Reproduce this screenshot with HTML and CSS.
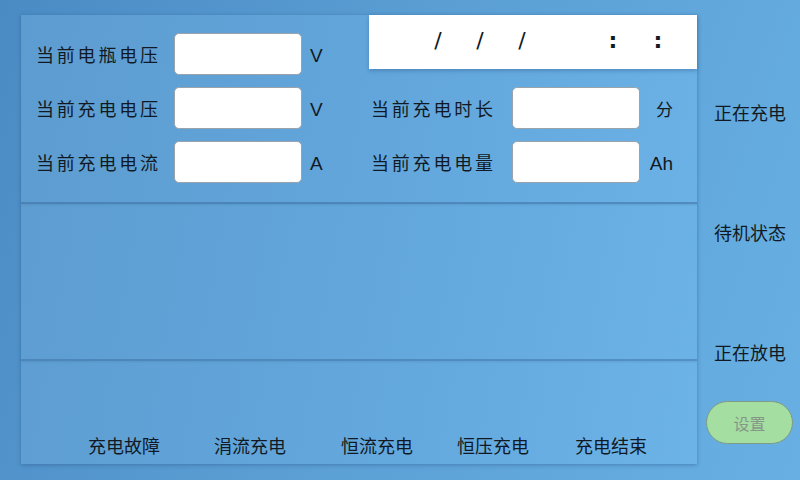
FILE: index.html
```html
<!DOCTYPE html>
<html lang="zh">
<head>
<meta charset="utf-8">
<link rel="stylesheet" href="styles.css">
</head>
<body>
<div class="screen">
  <div class="panel">
    <div class="section top">
      <div class="col left">
        <div class="row"><span class="label">当前电瓶电压</span><span class="field"></span><span class="unit">V</span></div>
        <div class="row"><span class="label">当前充电电压</span><span class="field"></span><span class="unit">V</span></div>
        <div class="row"><span class="label">当前充电电流</span><span class="field"></span><span class="unit">A</span></div>
      </div>
      <div class="col right">
        <div class="datebox">
          <span class="sep s1">/</span><span class="sep s2">/</span><span class="sep s3">/</span><span class="sep s4">:</span><span class="sep s5">:</span>
        </div>
        <div class="row r2"><span class="label">当前充电时长</span><span class="field"></span><span class="unit cn">分</span></div>
        <div class="row r3"><span class="label">当前充电电量</span><span class="field"></span><span class="unit">Ah</span></div>
      </div>
    </div>
    <div class="section middle"></div>
    <div class="section bottom">
      <span class="state">充电故障</span>
      <span class="state">涓流充电</span>
      <span class="state">恒流充电</span>
      <span class="state">恒压充电</span>
      <span class="state">充电结束</span>
    </div>
  </div>
  <div class="sidebar">
    <span class="mode">正在充电</span>
    <span class="mode">待机状态</span>
    <span class="mode">正在放电</span>
    <button class="setbtn">设置</button>
  </div>
</div>
</body>
</html>
```
FILE: styles.css
```css
html, body {
  margin: 0;
  padding: 0;
  width: 800px;
  height: 480px;
  overflow: hidden;
}
body {
  background: linear-gradient(110deg, #4a8bc3 0%, #5a9ed4 45%, #68b0e3 100%);
  font-family: "Noto Sans CJK SC", "Noto Sans", sans-serif;
  color: #111a24;
}
.screen {
  display: flex;
  padding: 15px 0 0 21px;
  height: 480px;
  box-sizing: border-box;
}
.panel {
  width: 676px;
  height: 449px;
  display: flex;
  flex-direction: column;
  background: linear-gradient(100deg, #5d9cd0 0%, #62a6db 50%, #6cb3e7 100%);
  box-shadow: 0 1px 4px rgba(40, 80, 130, 0.45);
}
.section.top {
  height: 187px;
  display: flex;
  border-bottom: 2px solid rgba(60, 110, 160, 0.55);
  box-shadow: 0 1px 2px rgba(60, 110, 160, 0.25);
}
.col.left {
  width: 348px;
  padding: 18px 0 0 15px;
  box-sizing: border-box;
  display: flex;
  flex-direction: column;
  gap: 12px;
}
.col.right {
  flex: 1;
  display: flex;
  flex-direction: column;
}
.row {
  display: flex;
  align-items: center;
  height: 42px;
}
.label {
  font-size: 18px;
  letter-spacing: 2.8px;
  width: 138px;
  white-space: nowrap;
}
.field {
  width: 126px;
  height: 40px;
  background: #ffffff;
  border: 1px solid #9aa3ab;
  border-radius: 5px;
}
.unit {
  font-family: "Liberation Sans", "Noto Sans CJK SC", sans-serif;
  font-size: 19px;
  margin-left: 8px;
  padding-top: 4px;
}
.col.right .row {
  padding-left: 2px;
}
.col.right .label {
  width: 141px;
}
.col.right .unit {
  margin-left: 0;
  width: 33px;
  text-align: right;
}
.col.right .unit.cn {
  font-family: "Noto Sans CJK SC", sans-serif;
  font-size: 17px;
  padding-top: 0;
}
.row.r2 { margin-top: 18px; }
.row.r3 { margin-top: 12px; }
.datebox {
  height: 54px;
  background: #ffffff;
  box-shadow: 0 2px 4px rgba(40, 80, 130, 0.35);
  display: flex;
  align-items: center;
  font-family: "DejaVu Sans", sans-serif;
  font-size: 22px;
  padding-left: 64px;
  padding-bottom: 4px;
  box-sizing: border-box;
}
.sep {
  width: 10px;
  text-align: center;
}
.sep.s2, .sep.s3 { margin-left: 32px; }
.sep.s4 { margin-left: 81px; font-weight: bold; }
.sep.s5 { margin-left: 35px; font-weight: bold; }
.section.middle {
  height: 155px;
  border-bottom: 2px solid rgba(60, 110, 160, 0.5);
  box-shadow: 0 1px 2px rgba(60, 110, 160, 0.25);
}
.section.bottom {
  flex: 1;
  display: grid;
  grid-template-columns: 126px 127px 116px 118px auto;
  align-items: end;
  padding: 0 0 7px 67px;
}
.state {
  font-size: 18px;
  line-height: 24px;
  white-space: nowrap;
}
.sidebar {
  flex: 1;
  display: flex;
  flex-direction: column;
  align-items: flex-start;
  padding: 85px 0 0 17px;
}
.mode {
  font-size: 18px;
  line-height: 24px;
  white-space: nowrap;
  margin-bottom: 96px;
}
.mode:nth-child(3) { margin-bottom: 37px; }
.setbtn {
  margin-left: -8px;
  width: 87px;
  height: 43px;
  border-radius: 22px;
  background: #a4dea0;
  border: 1px solid #7f9a84;
  color: #86968a;
  font-family: "Noto Sans CJK SC", sans-serif;
  font-size: 16px;
  padding: 0;
}
```
